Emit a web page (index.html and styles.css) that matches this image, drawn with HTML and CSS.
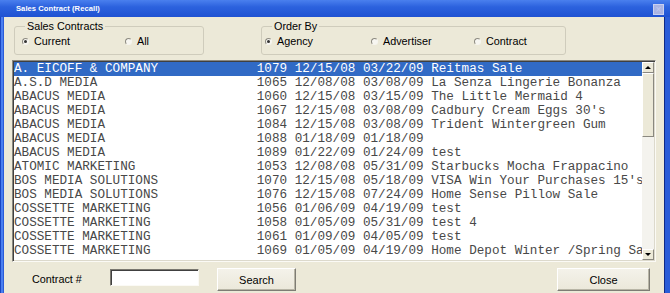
FILE: index.html
```html
<!DOCTYPE html>
<html lang="en">
<head>
  <meta charset="UTF-8" />
  <title>Sales Contract (Recall)</title>
  <link rel="stylesheet" href="styles.css">
</head>
<body>

  <div class="window">
    <div class="titlebar">
      <span class="title">Sales Contract (Recall)</span>
      <span class="close-box">&times;</span>
    </div>

    <div class="frame">
      <div class="edge-left"></div>

      <div class="dialog">
        <div class="options">
          <fieldset class="group group-status">
            <legend>Sales Contracts</legend>
            <div class="radios">
              <label class="radio col-a"><span class="dot checked"></span>Current</label>
              <label class="radio"><span class="dot"></span>All</label>
            </div>
          </fieldset>

          <fieldset class="group group-order">
            <legend>Order By</legend>
            <div class="radios">
              <label class="radio col-b"><span class="dot checked"></span>Agency</label>
              <label class="radio col-c"><span class="dot"></span>Advertiser</label>
              <label class="radio"><span class="dot"></span>Contract</label>
            </div>
          </fieldset>
        </div>

        <div class="listbox">
          <div class="rows">
            <div class="row selected"><span class="name">A. EICOFF &amp; COMPANY</span><span>1079 12/15/08 03/22/09 Reitmas Sale</span></div>
            <div class="row"><span class="name">A.S.D MEDIA</span><span>1065 12/08/08 03/08/09 La Senza Lingerie Bonanza</span></div>
            <div class="row"><span class="name">ABACUS MEDIA</span><span>1060 12/15/08 03/15/09 The Little Mermaid 4</span></div>
            <div class="row"><span class="name">ABACUS MEDIA</span><span>1067 12/15/08 03/08/09 Cadbury Cream Eggs 30's</span></div>
            <div class="row"><span class="name">ABACUS MEDIA</span><span>1084 12/15/08 03/08/09 Trident Wintergreen Gum</span></div>
            <div class="row"><span class="name">ABACUS MEDIA</span><span>1088 01/18/09 01/18/09</span></div>
            <div class="row"><span class="name">ABACUS MEDIA</span><span>1089 01/22/09 01/24/09 test</span></div>
            <div class="row"><span class="name">ATOMIC MARKETING</span><span>1053 12/08/08 05/31/09 Starbucks Mocha Frappacino</span></div>
            <div class="row"><span class="name">BOS MEDIA SOLUTIONS</span><span>1070 12/15/08 05/18/09 VISA Win Your Purchases 15's</span></div>
            <div class="row"><span class="name">BOS MEDIA SOLUTIONS</span><span>1076 12/15/08 07/24/09 Home Sense Pillow Sale</span></div>
            <div class="row"><span class="name">COSSETTE MARKETING</span><span>1056 01/06/09 04/19/09 test</span></div>
            <div class="row"><span class="name">COSSETTE MARKETING</span><span>1058 01/05/09 05/31/09 test 4</span></div>
            <div class="row"><span class="name">COSSETTE MARKETING</span><span>1061 01/09/09 04/05/09 test</span></div>
            <div class="row"><span class="name">COSSETTE MARKETING</span><span>1069 01/05/09 04/19/09 Home Depot Winter /Spring Sale</span></div>
          </div>
          <div class="scrollbar">
            <div class="sb-btn"><span class="arrow-up"></span></div>
            <div class="sb-thumb"></div>
            <div class="sb-track"></div>
            <div class="sb-btn"><span class="arrow-down"></span></div>
          </div>
        </div>

        <div class="bottom">
          <label class="lbl" for="contract">Contract #</label>
          <input type="text" id="contract" class="contract-input" />
          <button class="btn btn-search">Search</button>
          <button class="btn btn-close">Close</button>
        </div>
      </div>

      <div class="edge-right"></div>
    </div>
  </div>

</body>
</html>
```

FILE: styles.css
```css
* {
  margin: 0;
  padding: 0;
  box-sizing: border-box;
}

body {
  width: 670px;
  height: 293px;
  overflow: hidden;
  background: #2457d6;
  font-family: 'Liberation Sans', Arial, sans-serif;
  font-size: 11px;
  color: #000;
}

.window {
  display: flex;
  flex-direction: column;
  height: 293px;
}

/* title bar */
.titlebar {
  height: 17px;
  display: flex;
  align-items: center;
  justify-content: space-between;
  padding-left: 16px;
  padding-right: 6px;
  background: linear-gradient(to bottom, #4a80ee 0%, #2c62de 40%, #1f52d2 100%);
}

.title {
  color: #fff;
  font-weight: bold;
  font-size: 7.6px;
  letter-spacing: 0.05px;
}

.close-box {
  width: 11px;
  height: 11px;
  margin-top: 2px;
  background: #aab4e4;
  border: 1px solid #c9d0f0;
  color: #c2c9ee;
  font-size: 10px;
  line-height: 9px;
  text-align: center;
}

.frame {
  flex: 1;
  display: flex;
}

.edge-left {
  width: 4px;
  background: linear-gradient(to right, #1a46c2 0, #1a46c2 1px, #4a7ff0 1px, #4a7ff0 3px, #2a5cd8 3px);
}

.edge-right {
  width: 6px;
  border-left: 1px solid #0f2a86;
  background: #2a5cd8;
}

.dialog {
  flex: 1;
  background: #ece9d8;
  display: flex;
  flex-direction: column;
}

/* group boxes */
.options {
  display: flex;
  margin-top: 3px;
}

.group {
  border: 1px solid #cfccbc;
  border-radius: 3px;
  padding: 2px 0 6px 0;
}

.group legend {
  margin-left: 10px;
  padding: 0 2px;
  line-height: 13px;
  font-size: 10.8px;
}

.group-status {
  margin-left: 10px;
  width: 190px;
}

.group-status .radios {
  padding-left: 7px;
}

.group-order {
  margin-left: 57px;
  width: 305px;
}

.group-order .radios {
  padding-left: 3px;
}

.radios {
  display: flex;
  height: 13px;
}

.radio {
  display: flex;
  align-items: center;
  gap: 5px;
  font-size: 10.8px;
  line-height: 13px;
}

.col-a { width: 103px; }
.col-b { width: 106px; }
.col-c { width: 103px; }

.dot {
  width: 7px;
  height: 7px;
  border-radius: 50%;
  border: 1px solid;
  border-color: #8c8a80 #f6f5ef #f6f5ef #8c8a80;
  background: #f7f6f1;
  display: flex;
  align-items: center;
  justify-content: center;
}

.dot.checked::after {
  content: "";
  width: 3px;
  height: 3px;
  border-radius: 50%;
  background: #333;
}

/* list */
.listbox {
  margin: 5px 0 0 8px;
  width: 644px;
  height: 202px;
  display: flex;
  border: 1px solid;
  border-color: #8a8880 #fbfaf5 #fbfaf5 #8a8880;
  box-shadow: inset 1px 1px 0 #404040, inset -1px -1px 0 #dcd9cc;
  padding: 1px;
  background: #fff;
}

.rows {
  flex: 1;
  overflow: hidden;
  font-family: 'Liberation Mono', 'Courier New', monospace;
  font-size: 12.65px;
  color: #484848;
}

.row {
  height: 14px;
  line-height: 14px;
  white-space: pre;
  overflow: hidden;
  display: flex;
}

.row .name {
  width: 32ch;
  flex-shrink: 0;
}

.row.selected {
  background: #316ac5;
  color: #fff;
}

.scrollbar {
  width: 12px;
  display: flex;
  flex-direction: column;
  background: #f4f3ee;
}

.sb-btn {
  height: 11px;
  background: #ece9d8;
  border: 1px solid;
  border-color: #fff #8a8880 #8a8880 #fff;
  display: flex;
  align-items: center;
  justify-content: center;
}

.sb-thumb {
  height: 64px;
  background: #ece9d8;
  border: 1px solid;
  border-color: #fff #8a8880 #8a8880 #fff;
}

.sb-track {
  flex: 1;
}

.arrow-up {
  border-left: 3px solid transparent;
  border-right: 3px solid transparent;
  border-bottom: 3px solid #000;
}

.arrow-down {
  border-left: 3px solid transparent;
  border-right: 3px solid transparent;
  border-top: 3px solid #000;
}

/* bottom row */
.bottom {
  display: flex;
  align-items: flex-start;
  margin-top: 6px;
  padding-left: 28px;
  padding-right: 14px;
}

.lbl {
  line-height: 23px;
  font-size: 10.8px;
  width: 78px;
}

.contract-input {
  width: 89px;
  height: 17px;
  margin-top: 1px;
  background: #fff;
  border: 1px solid;
  border-color: #7a7870 #fbfaf5 #fbfaf5 #7a7870;
  box-shadow: inset 1px 1px 0 #404040;
  outline: none;
}

.btn {
  height: 23px;
  background: linear-gradient(to bottom, #f4f2ea, #ebe8da);
  border: 1px solid;
  border-color: #fff #7e7c74 #7e7c74 #fff;
  box-shadow: inset -1px -1px 0 #b8b5a6;
  font-family: 'Liberation Sans', Arial, sans-serif;
  font-size: 11px;
  color: #000;
}

.btn-search {
  width: 79px;
  margin-left: 18px;
}

.btn-close {
  width: 93px;
  margin-left: auto;
}
```
